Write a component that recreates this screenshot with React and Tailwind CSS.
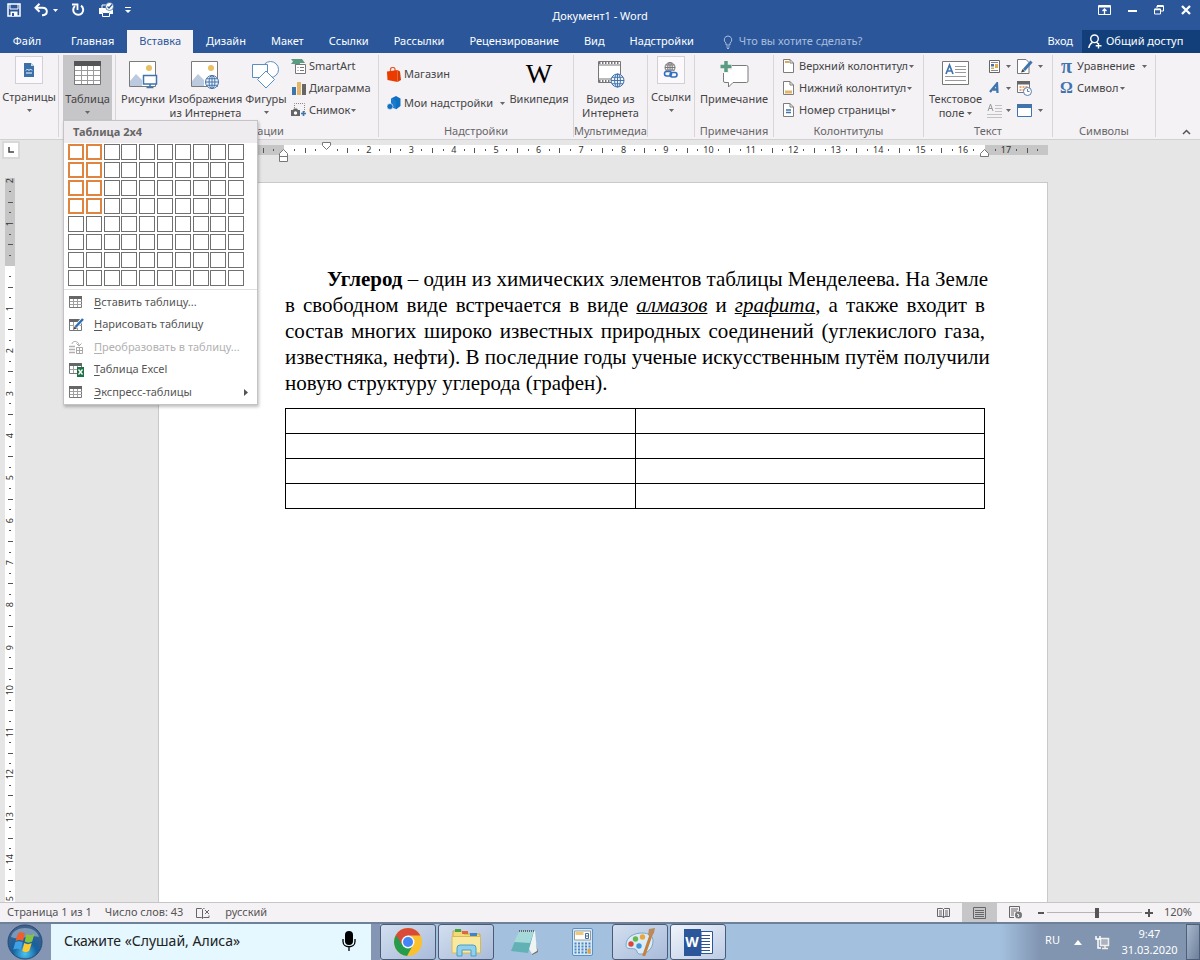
import React, { useState } from 'react';

/* ---------- small helpers ---------- */

const Caret = ({ className = '' }) => (
  <svg className={`shrink-0 ${className}`} width="5" height="3" viewBox="0 0 5 3">
    <path d="M0 0h5L2.500 3z" fill="#666" />
  </svg>
);

const Svg = ({ w, h, children }) => (
  <svg className="shrink-0" width={w} height={h} viewBox={`0 0 ${w} ${h}`} fill="none">
    {children}
  </svg>
);

/* ---------- quick access + window icons ---------- */

const SaveIcon = () => (
  <Svg w={14} h={14}>
    <path d="M1 1h12v12H1z" stroke="#fff" strokeWidth="1.500" />
    <path d="M3 1v5h8V1" stroke="#fff" />
    <path d="M3.500 8.500h7V13h-7z" fill="#fff" />
    <path d="M5 10h2v3H5z" fill="#2b579a" />
  </Svg>
);

const UndoIcon = () => (
  <Svg w={14} h={14}>
    <path d="M5.500 .8L1.500 4.800l4 4" stroke="#fff" strokeWidth="2" />
    <path d="M2 4.800h6.500c3 0 4.300 1.500 4.300 3.800s-1.800 3.700-4.800 3.700" stroke="#fff" strokeWidth="2" />
  </Svg>
);

const RedoIcon = () => (
  <Svg w={14} h={14}>
    <path d="M10 2.700a5 5 0 1 1-6 .3" stroke="#fff" strokeWidth="2" />
    <path d="M1 1.500h5.500V7" stroke="#fff" strokeWidth="1.800" />
  </Svg>
);

const PrintIcon = () => (
  <Svg w={17} h={16}>
    <path d="M1 6h14v6h-3v-2H4v2H1z" fill="#fff" />
    <path d="M4.500 10.500h7v4h-7z" fill="#2b579a" stroke="#fff" />
    <path d="M4 6V3h4" stroke="#fff" />
    <circle cx="11.500" cy="4.500" r="4" fill="#fff" stroke="#2b579a" strokeWidth=".7" />
    <path d="M9.500 4.500L11 6l3-3.500" stroke="#2b579a" strokeWidth="1.200" />
  </Svg>
);

const RibbonOptionsIcon = () => (
  <Svg w={13} h={10}>
    <path d="M.5.5h12v9H.5z" stroke="#fff" />
    <path d="M1 1h11v1.500H1z" fill="#fff" />
    <path d="M6.500 9V4M4.500 6l2-2 2 2" stroke="#fff" strokeWidth="1.300" />
  </Svg>
);

const RestoreIcon = () => (
  <Svg w={10} h={10}>
    <path d="M3 3V1h6.500v5H7" stroke="#fff" />
    <path d="M3 1h6.500" stroke="#fff" strokeWidth="2" />
    <path d="M.5 4h6v5h-6z" stroke="#fff" />
    <path d="M.5 4.500h6" stroke="#fff" strokeWidth="1.500" />
  </Svg>
);

const CloseIcon = () => (
  <Svg w={10} h={10}>
    <path d="M1 1l8 8M9 1L1 9" stroke="#fff" strokeWidth="2.300" />
  </Svg>
);

const PersonIcon = () => (
  <Svg w={14} h={15}>
    <circle cx="6.500" cy="4.800" r="3.800" stroke="#fff" strokeWidth="1.400" />
    <path d="M.8 14c.4-3 2-4.800 3.700-5.700M8.500 8.300l1.500 1.200M10.500 9v5.500M7.700 11.800h5.800" stroke="#fff" strokeWidth="1.400" />
  </Svg>
);

const BulbIcon = () => (
  <Svg w={10} h={14}>
    <path d="M5 1a3.800 3.800 0 0 0-2 7v2h4V8a3.800 3.800 0 0 0-2-7zM3.300 12h3.400M4 13.500h2" stroke="#a9bddd" />
  </Svg>
);

/* ---------- ribbon icons ---------- */

const Globe = ({ x = 0, y = 0, r = 6.5, color = '#3f74ad' }) => (
  <g transform={`translate(${x} ${y})`} stroke={color} strokeWidth="1">
    <circle r={r} fill="#f5f2f6" />
    <ellipse rx={r * 0.45} ry={r} />
    <path d={`M${-r} 0H${r}M0 ${-r}V${r}M${-r * 0.85} ${-r * 0.5}H${r * 0.85}M${-r * 0.85} ${r * 0.5}H${r * 0.85}`} />
  </g>
);

const PageIcon = () => (
  <Svg w={12} h={14}>
    <path d="M1 0h7l3 3v11H1z" fill="#3b70a9" />
    <path d="M8 0v3h3z" fill="#c9dbee" />
    <path d="M3 7.500l1.500-1.500L6 7.500 7.500 6 9 7.500M3 10h6" stroke="#fff" />
  </Svg>
);

const TableBigIcon = () => (
  <Svg w={27} h={24}>
    <path d="M.5.5h26v23H.5z" fill="#fff" stroke="#777" />
    <path d="M0 0h27v5H0z" fill="#555" />
    <path d="M1 9.500h25M1 14.500h25M1 19.500h25M7.500 5v18M13.500 5v18M19.500 5v18" stroke="#9a9a9a" />
  </Svg>
);

const Landscape = () => (
  <>
    <path d="M.5.5h26v25H.5z" fill="#fff" stroke="#7a7a7a" />
    <circle cx="20" cy="7" r="3" fill="#e8bf62" />
    <path d="M1 25v-5l6-7 6 6v6z" fill="#bccadf" />
  </>
);

const PictureIcon = () => (
  <Svg w={29} h={28}>
    <Landscape />
    <path d="M14.500 14.500h13v8.500h-13z" fill="#fff" stroke="#3f74ad" strokeWidth="1.500" />
    <path d="M21 23v3M17.500 26.500h7" stroke="#3f74ad" strokeWidth="1.500" />
  </Svg>
);

const WebPictureIcon = () => (
  <Svg w={29} h={28}>
    <Landscape />
    <Globe x={21} y={21} />
  </Svg>
);

const ShapesIcon = () => (
  <Svg w={28} h={28}>
    <circle cx="18.500" cy="8.500" r="8" fill="#fff" stroke="#5b8fc0" />
    <path d="M.5 3.500h15v13H.5z" fill="#fff" stroke="#5b8fc0" />
    <path d="M14 10l8.500 8.500-8.500 8.500-8.500-8.500z" fill="#fff" stroke="#5b8fc0" />
  </Svg>
);

const SmartArtIcon = () => (
  <Svg w={15} h={15}>
    <path d="M0 0h11l3 4H9v3H5L3.500 5H0l2-2.500z" fill="#5a9c82" />
    <path d="M4.500 5.500h10v9h-10z" fill="#fff" stroke="#777" />
    <path d="M6.500 8.500h1M9 8.500h4M6.500 11.500h1M9 11.500h4" stroke="#777" />
  </Svg>
);

const ChartIcon = () => (
  <Svg w={14} h={13}>
    <path d="M0 5h4v8H0z" fill="#3f74ad" />
    <path d="M5 0h4v13H5z" fill="#e3b566" />
    <path d="M10 2h4v11h-4z" fill="#666" />
  </Svg>
);

const ScreenshotIcon = () => (
  <Svg w={15} h={14}>
    <path d="M3.500 5V.5h10V9" stroke="#888" strokeDasharray="1 1" />
    <path d="M0 7h2l1-1.500h3L7 7h2v6H0z" fill="#666" />
    <circle cx="4.500" cy="10" r="1.700" fill="#fff" />
    <path d="M12.500 8v5M10 10.500h5" stroke="#3f74ad" strokeWidth="1.700" />
  </Svg>
);

const StoreIcon = () => (
  <Svg w={14} h={15}>
    <path d="M3.500 4.500V2C3.500 0 8 0 8 2v2.500" stroke="#e4572e" strokeWidth="1.200" />
    <path d="M0 4.500L10.500 3v12L.5 13z" fill="#eb3c00" />
    <path d="M10.500 3L13 4.500 14 13l-3.500 2z" fill="#d83b01" />
  </Svg>
);

const AddinsIcon = () => (
  <Svg w={14} h={14}>
    <path d="M4 2.500L9 0l4.500 2.500V10L9 13.500V6z" fill="#0f6fc0" />
    <path d="M4 2.500L9 5v8L6 12 4 7z" fill="#1a7ad0" />
    <circle cx="3" cy="10.500" r="3" fill="#0f6fc0" stroke="#f5f2f6" strokeWidth=".6" />
  </Svg>
);

const VideoIcon = () => (
  <Svg w={28} h={27}>
    <path d="M1.500.5h22v21h-22z" fill="#fff" stroke="#777" />
    <path d="M2 2h21M2 20h21" stroke="#777" strokeWidth="2" strokeDasharray="1.500 1.500" />
    <path d="M2 4h21M2 18h21" stroke="#777" />
    <Globe x={20.5} y={19.5} />
  </Svg>
);

const LinksIcon = () => (
  <Svg w={16} h={17}>
    <Globe x={7} y={5.5} r={5} color="#777" />
    <path d="M1 9h14v7H1z" fill="#f8f6f9" />
    <rect x="1.500" y="9.500" width="7" height="4.500" rx="2.200" stroke="#2f6fc0" strokeWidth="1.600" />
    <rect x="7" y="10.500" width="7" height="4.500" rx="2.200" stroke="#2f6fc0" strokeWidth="1.600" />
  </Svg>
);

const CommentIcon = () => (
  <Svg w={29} h={27}>
    <path d="M3.500 4.500h23q1.500 0 1.500 1.500v14q0 1.500-1.500 1.500H13L8.500 26v-4.500H5q-1.500 0-1.500-1.500z" fill="#fff" stroke="#7a7a7a" />
    <path d="M6 0v12M0 6h12" stroke="#f5f2f6" strokeWidth="6" />
    <path d="M6 0v11M.5 5.500h11" stroke="#5a9c82" strokeWidth="3.500" />
  </Svg>
);

const DocIcon = ({ kind }) => (
  <Svg w={11} h={14}>
    <path d="M.5.5h6.500l3.500 3.500v9.500H.5z" fill="#fff" stroke="#7d7d7d" />
    <path d="M7 .5V4h3.500" stroke="#7d7d7d" />
    {kind === 'header' && <path d="M2 3h4" stroke="#e3a94e" strokeWidth="2" />}
    {kind === 'footer' && <path d="M2 11h7" stroke="#e3b566" strokeWidth="3" />}
    {kind === 'number' && <path d="M3 7h5M3 9.500h5" stroke="#3f74ad" strokeWidth="1.500" />}
  </Svg>
);

const TextBoxIcon = () => (
  <Svg w={27} h={24}>
    <path d="M.5.5h26v23H.5z" fill="#fff" stroke="#777" />
    <path d="M4 13L7.500 4l3.500 9M5.300 10h4.400" stroke="#3f74ad" strokeWidth="1.700" />
    <path d="M13 5.500h11M13 8.500h11M13 11.500h11M3 15.500h21M3 19.500h21" stroke="#9a9a9a" />
  </Svg>
);

const QuickPartsIcon = () => (
  <Svg w={11} h={13}>
    <path d="M.5.5h10v12H.5z" fill="#fff" stroke="#666" />
    <path d="M2 2.500h7M2 10.500h7" stroke="#888" />
    <path d="M2 4h3v2.500H2z" fill="#3f74ad" />
    <path d="M6 4h3v4H6zM2 7.500h3V9H2z" fill="#e3a94e" />
  </Svg>
);

const SignatureIcon = () => (
  <Svg w={16} h={15}>
    <path d="M.5.5H9l3 3v11H.5z" fill="#fff" stroke="#777" />
    <path d="M14.500 2.500L7 11" stroke="#3f74ad" strokeWidth="3" />
    <path d="M4 13.500l1.500-3.500L8 12.500z" fill="#444" />
  </Svg>
);

const WordArtIcon = () => (
  <Svg w={11} h={12}>
    <path d="M1 10L8 1.500 8.500 11M4 7.500h5" stroke="#3f74ad" strokeWidth="2.300" />
  </Svg>
);

const DateIcon = () => (
  <Svg w={15} h={15}>
    <path d="M.5.5h12v11H.5z" fill="#fff" stroke="#777" />
    <path d="M0 0h13v3.500H0z" fill="#666" />
    <path d="M2.500 6h8M2.500 9h5" stroke="#e08a4a" strokeWidth="1.700" strokeDasharray="2 1" />
    <circle cx="10.500" cy="10.500" r="4" fill="#fff" stroke="#5b7fae" />
    <path d="M10.500 8v2.500h2" stroke="#5b7fae" />
  </Svg>
);

const DropCapIcon = () => (
  <Svg w={15} h={15}>
    <path d="M1 8L3.500 1 6 8M2 5.500h3" stroke="#999" />
    <path d="M8 2.500h7M8 5.500h7M8 8.500h7M0 11.500h15M0 14.500h15" stroke="#c2c2c2" />
  </Svg>
);

const ObjectIcon = () => (
  <Svg w={15} h={13}>
    <path d="M.5.5h14v12H.5z" fill="#fff" stroke="#3f74ad" />
    <path d="M0 0h15v4H0z" fill="#3f74ad" />
  </Svg>
);

/* ---------- menu icons ---------- */

const TableSmallIcon = () => (
  <Svg w={14} h={14}>
    <path d="M.5 1.500h12v11H.5z" fill="#fff" stroke="#777" />
    <path d="M0 1h13v3H0z" fill="#666" />
    <path d="M1 6.500h12M1 9.500h12M4.500 4v8M8.500 4v8" stroke="#a0a0a0" />
  </Svg>
);

const DrawTableIcon = () => (
  <Svg w={15} h={14}>
    <path d="M.5 1.500h12v11H.5z" fill="#fff" stroke="#777" />
    <path d="M0 1h10v3H0z" fill="#666" />
    <path d="M1 7.500h12M4.500 4v8M8.500 4v8" stroke="#a0a0a0" />
    <path d="M14 1L6 9.500" stroke="#fff" strokeWidth="4" />
    <path d="M14 1L6.500 9" stroke="#2f6fb5" strokeWidth="2.500" />
    <path d="M4.500 11.500l1-3L8 10.500z" fill="#444" />
  </Svg>
);

const ConvertIcon = () => (
  <Svg w={15} h={14}>
    <path d="M0 6.500h6M0 9.500h6M0 12.500h6" stroke="#b0b0b0" strokeWidth="1.300" />
    <path d="M7.500 7.500h6v6h-6zM10.500 8v5M8 10.500h6" stroke="#a8a8a8" />
    <path d="M3 4c0-3 6-4 7 1M7.500 3.500L10 6l2.500-2.500" stroke="#a8a8a8" />
  </Svg>
);

const ExcelIcon = () => (
  <Svg w={15} h={15}>
    <path d="M.5 1.500h12v10H.5z" fill="#fff" stroke="#777" />
    <path d="M0 1h13v3H0z" fill="#666" />
    <path d="M1 7.500h11M4.500 4v7M8.500 4v7" stroke="#a0a0a0" />
    <path d="M8 5h7v10H8z" fill="#1e7145" />
    <path d="M9.500 7.500l4 5M13.500 7.500l-4 5" stroke="#fff" strokeWidth="1.300" />
  </Svg>
);

/* ---------- ribbon building blocks ---------- */

const Group = ({ label, width, children }) => (
  <section className={`flex shrink-0 flex-col border-r border-[#d8d5d9] my-[2px] ${width}`}>
    <div className="flex flex-1">{children}</div>
    <div className="h-[14px] text-center leading-4 whitespace-nowrap text-[#666]">{label}</div>
  </section>
);

const BigButton = ({ icon, label, caret, className = '' }) => (
  <button className={`flex flex-col items-center pt-[6px] leading-[14px] ${className}`}>
    <span className="flex h-[31px] items-start justify-center">{icon}</span>
    <span className="whitespace-pre text-center">{label}</span>
    {caret && <Caret className="mt-[5px]" />}
  </button>
);

const BoxedButton = ({ icon, label, className = '' }) => (
  <button className={`flex flex-col items-center leading-[14px] ${className}`}>
    <span className="mt-px mb-[6px] flex size-7 items-center justify-center border border-[#d2d0d4] bg-[#fbf9fc]">{icon}</span>
    <span>{label}</span>
    <Caret className="mt-[5px]" />
  </button>
);

const SmallButton = ({ icon, label, caret, caretGap = 'ml-px' }) => (
  <button className="flex h-[22px] items-center whitespace-nowrap">
    <span className="mr-[3px] flex w-[15px] items-center justify-center">{icon}</span>
    {label && <span>{label}</span>}
    {caret && <Caret className={caretGap} />}
  </button>
);

/* ---------- title bar and tabs ---------- */

const TitleBar = () => (
  <header className="grid h-[30px] grid-cols-3 items-start text-white">
    <div className="flex h-5 items-center pl-[7px]">
      <button aria-label="Сохранить"><SaveIcon /></button>
      <button aria-label="Отменить" className="ml-[13px] flex items-center gap-[5px]">
        <UndoIcon />
        <svg width="5" height="3" viewBox="0 0 5 3"><path d="M0 0h5L2.500 3z" fill="#fff" /></svg>
      </button>
      <button aria-label="Повторить" className="ml-[13px]"><RedoIcon /></button>
      <button aria-label="Печать" className="ml-[13px]"><PrintIcon /></button>
      <button aria-label="Настройка панели" className="ml-[10px]">
        <svg width="6" height="6" viewBox="0 0 6 6"><path d="M0 0h6v1H0zM0 3h6L3 6z" fill="#fff" /></svg>
      </button>
    </div>
    <h1 className="pt-[6px] text-center leading-5">Документ1 - Word</h1>
    <div className="flex h-5 items-center justify-end gap-[17px] pr-[9px]">
      <button aria-label="Параметры ленты"><RibbonOptionsIcon /></button>
      <button aria-label="Свернуть"><Svg w={9} h={4}><path d="M0 3h9" stroke="#fff" strokeWidth="2" /></Svg></button>
      <button aria-label="Развернуть"><RestoreIcon /></button>
      <button aria-label="Закрыть"><CloseIcon /></button>
    </div>
  </header>
);

const tabs = ['Главная', 'Вставка', 'Дизайн', 'Макет', 'Ссылки', 'Рассылки', 'Рецензирование', 'Вид', 'Надстройки'];

const TabRow = () => {
  const [active, setActive] = useState('Вставка');

  return (
    <nav className="flex h-[23px] gap-px text-white">
      <button className="w-[58px] pr-1">Файл</button>
      {tabs.map((tab) => (
        <button
          key={tab}
          onClick={() => setActive(tab)}
          className={`px-3 ${tab === active ? 'bg-[#f5f2f6] text-[#2b579a]' : ''}`}
        >
          {tab}
        </button>
      ))}
      <label className="ml-4 flex flex-1 items-center gap-[6px]">
        <BulbIcon />
        <input
          aria-label="Помощник"
          placeholder="Что вы хотите сделать?"
          className="w-40 bg-transparent outline-none placeholder:text-[#a9bddd]"
        />
      </label>
      <button className="px-2">Вход</button>
      <button className="flex w-[118px] items-center gap-1 bg-[#123f7a] pl-[6px]">
        <PersonIcon />
        Общий доступ
      </button>
    </nav>
  );
};

/* ---------- table drop-down ---------- */

const menuItems = [
  { icon: <TableSmallIcon />, first: 'В', rest: 'ставить таблицу...' },
  { icon: <DrawTableIcon />, first: 'Н', rest: 'арисовать таблицу' },
  { icon: <ConvertIcon />, first: 'П', rest: 'реобразовать в таблицу...', disabled: true },
  { icon: <ExcelIcon />, first: 'Т', rest: 'аблица Excel' },
  { icon: <TableSmallIcon />, first: 'Э', rest: 'кспресс-таблицы', submenu: true },
];

const TableMenu = ({ size, onPick }) => (
  <div className="absolute top-[65px] left-0 z-20 w-[195px] border border-[#c5c3c6] bg-white shadow-[1px_2px_3px_rgba(0,0,0,0.25)]">
    <div className="h-[22px] bg-[#efecf0] pl-[9px] leading-[22px] font-bold text-[#666]">
      Таблица {size.cols}x{size.rows}
    </div>
    <div className="grid w-[182px] grid-cols-10 gap-y-[2px] pt-px pl-1">
      {Array.from({ length: 80 }, (_, i) => {
        const col = (i % 10) + 1;
        const row = Math.floor(i / 10) + 1;
        const selected = col <= size.cols && row <= size.rows;
        return (
          <button
            key={i}
            aria-label={`${col}x${row}`}
            onClick={() => onPick({ cols: col, rows: row })}
            className={`size-4 bg-white ${selected ? 'border-2 border-[#e0853f]' : 'border border-[#707070]'}`}
          />
        );
      })}
    </div>
    <ul className="mt-[3px] border-t border-[#e1dfe2] py-px">
      {menuItems.map((item, i) => (
        <li key={item.first}>
          <button
            disabled={item.disabled}
            className={`flex w-full items-center pl-[5px] ${i % 2 ? 'h-[23px]' : 'h-[22px]'} ${
              item.disabled ? 'text-[#b1b1b1]' : 'text-[#555]'
            }`}
          >
            <span className="w-[25px]">{item.icon}</span>
            <span>
              <span className="underline underline-offset-2">{item.first}</span>
              {item.rest}
            </span>
            {item.submenu && (
              <svg className="mr-[9px] ml-auto" width="4" height="7" viewBox="0 0 4 7">
                <path d="M0 0l4 3.500L0 7z" fill="#555" />
              </svg>
            )}
          </button>
        </li>
      ))}
    </ul>
  </div>
);

/* ---------- ribbon ---------- */

const Ribbon = ({ size, onPick }) => (
  <div className="flex h-[87px] border-b border-[#d2d0d3] bg-[#f5f2f6]">
    <Group width="w-[59px]">
      <BoxedButton icon={<PageIcon />} label="Страницы" className="w-full" />
    </Group>

    <Group width="w-[57px]">
      <div className="relative ml-[4px]">
        <BigButton icon={<TableBigIcon />} label="Таблица" caret className="h-[66px] w-[49px] bg-[#c6c5c7]" />
        <TableMenu size={size} onPick={onPick} />
      </div>
    </Group>

    <Group label="Иллюстрации" width="w-[263px]">
      <BigButton icon={<PictureIcon />} label="Рисунки" className="w-[54px]" />
      <BigButton icon={<WebPictureIcon />} label={'Изображения\nиз Интернета'} className="w-[71px]" />
      <BigButton icon={<ShapesIcon />} label="Фигуры" caret className="w-[50px]" />
      <div>
        <SmallButton icon={<SmartArtIcon />} label="SmartArt" />
        <SmallButton icon={<ChartIcon />} label="Диаграмма" />
        <SmallButton icon={<ScreenshotIcon />} label="Снимок" caret />
      </div>
    </Group>

    <Group label="Надстройки" width="w-[195px]">
      <div className="flex flex-col gap-[7px] pt-[8px] pl-[7px]">
        <SmallButton icon={<StoreIcon />} label="Магазин" />
        <SmallButton icon={<AddinsIcon />} label="Мои надстройки" caret caretGap="ml-[7px]" />
      </div>
      <BigButton
        icon={<span className="font-['Liberation_Serif',serif] text-[28px] leading-[26px] text-black">W</span>}
        label="Википедия"
        className="w-[70px]"
      />
    </Group>

    <Group label="Мультимедиа" width="w-[74px]">
      <BigButton icon={<VideoIcon />} label={'Видео из\nИнтернета'} className="w-full" />
    </Group>

    <Group width="w-[47px]">
      <BoxedButton icon={<LinksIcon />} label="Ссылки" className="w-full" />
    </Group>

    <Group label="Примечания" width="w-[79px]">
      <BigButton icon={<CommentIcon />} label="Примечание" className="w-full" />
    </Group>

    <Group label="Колонтитулы" width="w-[150px]">
      <div className="pl-[7px]">
        <SmallButton icon={<DocIcon kind="header" />} label="Верхний колонтитул" caret />
        <SmallButton icon={<DocIcon kind="footer" />} label="Нижний колонтитул" caret />
        <SmallButton icon={<DocIcon kind="number" />} label="Номер страницы" caret />
      </div>
    </Group>

    <Group label="Текст" width="w-[129px]">
      <BigButton
        icon={<TextBoxIcon />}
        label={
          <>
            Текстовое
            {'\n'}
            <span className="inline-flex items-center gap-[3px]">поле<Caret /></span>
          </>
        }
        className="w-[63px]"
      />
      <div className="pr-[6px]">
        <SmallButton icon={<QuickPartsIcon />} caret />
        <SmallButton icon={<WordArtIcon />} caret />
        <SmallButton icon={<DropCapIcon />} caret />
      </div>
      <div>
        <SmallButton icon={<SignatureIcon />} caret caretGap="ml-[3px]" />
        <SmallButton icon={<DateIcon />} />
        <SmallButton icon={<ObjectIcon />} caret caretGap="ml-[3px]" />
      </div>
    </Group>

    <Group label="Символы" width="w-[103px]">
      <div className="pl-[6px]">
        <SmallButton icon={<span className="font-['Liberation_Serif',serif] text-xl leading-5 font-bold text-[#3f74ad]">π</span>} label="Уравнение" caret caretGap="ml-[7px]" />
        <SmallButton icon={<span className="font-['Liberation_Serif',serif] text-base font-bold text-[#3f74ad]">Ω</span>} label="Символ" caret />
      </div>
    </Group>

    <button aria-label="Свернуть ленту" className="mr-[9px] mb-[4px] ml-auto self-end">
      <Svg w={9} h={6}><path d="M1 5l3.500-3.500L8 5" stroke="#555" strokeWidth="1.500" /></Svg>
    </button>
  </div>
);

/* ---------- rulers ---------- */

// One mark per quarter of a centimetre, numbers on whole ones
const marks = (from, to) =>
  Array.from({ length: (to - from) * 4 + 1 }, (_, i) => from + i / 4);

const Mark = ({ value, skip, vertical }) => {
  const whole = Number.isInteger(value);
  const half = Number.isInteger(value * 2);
  let content = null;

  if (!skip) {
    if (whole) {
      content = <span className={vertical ? 'rotate-180 [writing-mode:vertical-rl]' : ''}>{Math.abs(value)}</span>;
    } else if (half) {
      content = <span className={`shrink-0 bg-[#555] ${vertical ? 'h-px w-[5px]' : 'h-[5px] w-px'}`} />;
    } else {
      content = <span className={`shrink-0 bg-[#555] ${vertical ? 'h-px w-[2px]' : 'h-[2px] w-px'}`} />;
    }
  }

  return <span className={`flex items-center justify-center ${vertical ? 'h-0' : 'w-0'}`}>{content}</span>;
};

const HorizontalRuler = () => (
  <div className="flex h-[42px] items-start">
    <button aria-label="Тип табуляции" className="mt-px ml-[2px] flex size-[18px] shrink-0 items-center justify-center border-2 border-[#d9d9d9] bg-white">
      <Svg w={6} h={6}><path d="M1 0v5h5" stroke="#444" strokeWidth="1.500" /></Svg>
    </button>
    <div className="flex flex-1 justify-center pr-[14px]">
      <div className="mt-[5px] flex h-[10px] w-[890px] text-[9px] leading-[10px] text-[#333]">
        <div className="flex w-[126px] justify-between bg-[#c6c6c6]">
          {marks(-3, 0).map((v) => <Mark key={v} value={v} skip={v === 0 || v === -3} />)}
        </div>
        <div className="relative flex flex-1 justify-between bg-white">
          {marks(0, 16.5).map((v) => <Mark key={v} value={v} skip={v === 0 || v === 1 || v === 16.5} />)}
          <svg className="absolute -top-[3px] left-[38px]" width="9" height="8" viewBox="0 0 9 8">
            <path d="M.5.5h8v3l-4 4-4-4z" fill="#fff" stroke="#777" />
          </svg>
          <svg className="absolute top-[4px] -left-[5px]" width="9" height="13" viewBox="0 0 9 13">
            <path d="M.5 4.500l4-4 4 4v8h-8zM.5 7.500h8" fill="#fff" stroke="#777" />
          </svg>
          <svg className="absolute top-[4px] -right-[4px] z-10" width="9" height="8" viewBox="0 0 9 8">
            <path d="M.5 7.500v-3l4-4 4 4v3z" fill="#fff" stroke="#777" />
          </svg>
        </div>
        <div className="flex w-[63px] justify-between bg-[#c6c6c6]">
          {marks(16.5, 18).map((v) => <Mark key={v} value={v} skip={v === 16.5 || v === 18} />)}
        </div>
      </div>
    </div>
  </div>
);

const VerticalRuler = () => (
  <div className="-mt-1 w-5 shrink-0 overflow-hidden pl-[5px] text-[9px] leading-[10px] text-[#333]">
    <div className="flex h-[88px] w-[10px] flex-col justify-between bg-[#c6c6c6] pt-[3px]">
      {marks(-2, 0).map((v) => <Mark key={v} value={v} skip={v === 0} vertical />)}
    </div>
    <div className="flex h-[636px] w-[10px] flex-col justify-between bg-white">
      {marks(0, 15).map((v) => <Mark key={v} value={v} skip={v === 0} vertical />)}
    </div>
  </div>
);

/* ---------- document ---------- */

const lines = [
  <><b>Углерод</b> – один из химических элементов таблицы Менделеева. На Земле</>,
  <>в свободном виде встречается в виде <i className="underline decoration-1">алмазов</i> и <i className="underline decoration-1">графита</i>, а также входит в</>,
  <>состав многих широко известных природных соединений (углекислого газа,</>,
  <>известняка, нефти). В последние годы ученые искусственным путём получили</>,
  <>новую структуру углерода (графен).</>,
];

const DocumentPage = ({ size }) => (
  <article className="min-h-full w-[890px] border border-b-0 border-[#c9c9c9] bg-white pt-[83px] pr-[62px] pl-[126px] font-['Liberation_Serif',serif] text-[21px] leading-[26px] text-black">
    <p>
      {lines.map((line, i) => (
        <span
          key={i}
          className={`block whitespace-nowrap ${i === 0 ? 'indent-[42px]' : ''} ${
            i < lines.length - 1 ? '[text-align-last:justify]' : ''
          }`}
        >
          {line}
        </span>
      ))}
    </p>
    <table className="mt-[12px] w-full table-fixed border-collapse">
      <tbody>
        {Array.from({ length: size.rows }, (_, r) => (
          <tr key={r} className="h-[25px]">
            {Array.from({ length: size.cols }, (_, c) => (
              <td key={c} className="border border-black" />
            ))}
          </tr>
        ))}
      </tbody>
    </table>
  </article>
);

/* ---------- status bar ---------- */

const StatusBar = () => (
  <footer className="flex h-5 items-center border-t border-[#c6c6c6] bg-[#f5f2f6] pl-[7px] text-[#555]">
    <span>Страница 1 из 1</span>
    <span className="ml-[13px]">Число слов: 43</span>
    <button aria-label="Правописание" className="ml-[13px]">
      <Svg w={14} h={12}>
        <path d="M.5 1.500h5l1 1v9l-1-1h-5zM6.500 2.500l1-1h1M6.500 11.500l1-1h5.500V8.500M9 3l4 4M13 3L9 7" stroke="#666" />
      </Svg>
    </button>
    <span className="ml-[15px]">русский</span>
    <div className="ml-auto flex h-full items-center">
      <button aria-label="Режим чтения" className="mr-[12px]">
        <Svg w={13} h={12}>
          <path d="M.5 1.500h5l1 1 1-1h5v8h-5l-1 1.500-1-1.500h-5zM6.500 2v9M2 4h3M2 6h3M2 8h3M8 4h3M8 6h3M8 8h3" stroke="#666" />
        </Svg>
      </button>
      <button aria-label="Разметка страницы" className="flex h-full w-[35px] items-center justify-center bg-[#c6c5c7]">
        <Svg w={13} h={12}>
          <path d="M.5.5h12v11H.5zM2 3.500h9M2 5.500h9M2 7.500h9M2 9.500h9" stroke="#666" />
        </Svg>
      </button>
      <button aria-label="Веб-документ" className="ml-[12px]">
        <Svg w={13} h={13}>
          <path d="M5 11.500H.5V.5h10V5M2 3h7M2 5h6M2 7h3M2 9h3" stroke="#666" />
          <circle cx="9.500" cy="9" r="3.500" fill="#777" />
          <path d="M8 8l2 1-1 2" stroke="#fff" />
        </Svg>
      </button>
      <button aria-label="Уменьшить" className="ml-[16px] h-[2px] w-[6px] bg-[#555]" />
      <input
        type="range"
        aria-label="Масштаб"
        min="10"
        max="220"
        defaultValue="120"
        className="mx-[3px] h-3 w-[95px] appearance-none bg-[linear-gradient(#b5b3b6,#b5b3b6)] bg-[length:100%_1px] bg-center bg-no-repeat [&::-webkit-slider-thumb]:h-[10px] [&::-webkit-slider-thumb]:w-[4px] [&::-webkit-slider-thumb]:appearance-none [&::-webkit-slider-thumb]:bg-[#555]"
      />
      <button aria-label="Увеличить">
        <Svg w={8} h={8}><path d="M4 0v8M0 4h8" stroke="#555" strokeWidth="2" /></Svg>
      </button>
      <span className="w-[47px] pr-[8px] text-right">120%</span>
    </div>
  </footer>
);

/* ---------- taskbar ---------- */

const StartOrb = () => (
  <svg width="36" height="36" viewBox="0 0 36 36">
    <defs>
      <radialGradient id="orb" cx="50%" cy="85%" r="80%">
        <stop offset="0" stopColor="#49c5f2" />
        <stop offset=".45" stopColor="#17609f" />
        <stop offset="1" stopColor="#41628c" />
      </radialGradient>
    </defs>
    <circle cx="18" cy="18" r="17" fill="url(#orb)" stroke="#2b4970" />
    <path d="M4 13C7 1 29 1 32 13 24 10 12 17 4 13z" fill="#fff" opacity=".35" />
    <path d="M11 9.500c2.500-1.600 4.500-1.500 7 0l-2 7.500c-2.500-1.500-5-1.500-7.500 0z" fill="#ef5f2c" />
    <path d="M19.500 10c2.500 1.500 5 1.500 8-.5l-2.300 8c-2.500 1.500-5 1.500-7.500 0z" fill="#86c440" />
    <path d="M8.200 18.300c2.500-1.500 5-1.500 7.500 0l-2 7.500c-2.500-1.500-5-1.500-7.500 0z" fill="#3fa0e6" />
    <path d="M17.200 19c2.500 1.500 5 1.500 7.500 0l-2.500 8c-2.500 1.500-4.500 1.500-7 0z" fill="#fcc92e" />
  </svg>
);

const MicIcon = () => (
  <Svg w={14} h={20}>
    <rect x="3" y="0" width="8" height="14" rx="4" fill="#000" />
    <path d="M1 8v2.500c0 7 12 7 12 0V8M7 15.500V20" stroke="#000" strokeWidth="1.300" />
  </Svg>
);

const ChromeIcon = () => (
  <Svg w={28} h={28}>
    <circle cx="14" cy="14" r="14" fill="#fbc02d" />
    <path d="M1.900 7A14 14 0 0 0 13 28l6-11-5-3z" fill="#259b4e" />
    <path d="M14 7.500h12.400A14 14 0 0 0 1.900 7L8.400 17z" fill="#d84a3a" />
    <circle cx="14" cy="14" r="6.500" fill="#f4f6f9" />
    <circle cx="14" cy="14" r="5" fill="#4285f4" />
  </Svg>
);

const FolderIcon = () => (
  <Svg w={31} h={29}>
    <path d="M2 3h9l2 3h16v17H2z" fill="#f3d977" stroke="#c9a945" />
    <path d="M4 1h6v3H4z" fill="#47a447" />
    <path d="M11 3h6v3h-6z" fill="#e2663b" />
    <path d="M19 5h7v3h-7z" fill="#3f85c6" />
    <path d="M1 8.500h28.500V25H1z" fill="#f9e9a0" stroke="#d6ba5a" />
    <path d="M6 28v-8q0-3 3-3h13q3 0 3 3v8h-5v-6h-9v6z" fill="#8fd0ee" stroke="#4d9cc6" />
  </Svg>
);

const NotepadIcon = () => (
  <Svg w={29} h={27}>
    <path d="M23 3l5 20-6 3z" fill="#73695d" />
    <path d="M9 2h16l2 20-5 3z" fill="#eef4f4" />
    <path d="M9 2h15l-6 22-17-2z" fill="#62b1b4" />
    <path d="M9 2h15l-4 12L4 13z" fill="#a6d9d9" />
    <path d="M9 2h15" stroke="#666" strokeWidth="2" strokeDasharray="1 1" />
  </Svg>
);

const CalcIcon = () => (
  <Svg w={21} h={28}>
    <rect x=".5" y=".5" width="20" height="27" rx="1.500" fill="#d7e8f6" stroke="#5a91c4" />
    <path d="M2.500 3h16v9h-16z" fill="#fff" stroke="#9a9a9a" />
    <path d="M3.500 4h8v3h-8z" fill="#f0c878" />
    <path d="M13.500 5.500h3v5h-3zM13.500 8h3" stroke="#3f6ea5" />
    <path d="M2.500 15.500h16M2.500 18.500h16M2.500 21.500h16M2.500 24.500h16" stroke="#4c88c2" strokeWidth="2" strokeDasharray="2 1.500" />
    <path d="M15.500 21h3v4.500h-3z" fill="#eaa13a" />
  </Svg>
);

const PaintIcon = () => (
  <Svg w={31} h={28}>
    <path d="M1 17C1 9 9 5 17 5c7 0 11 3 11 8 0 8-7 14-14 13-3-1-1-4-4-5-4-1-9 1-9-4z" fill="#d9ecf7" stroke="#7aa7c7" />
    <circle cx="6" cy="16" r="2.700" fill="#d9463e" />
    <circle cx="10.500" cy="11" r="2.700" fill="#69b64a" />
    <circle cx="17.500" cy="9" r="2.700" fill="#eba63a" />
    <circle cx="14" cy="18" r="2.700" fill="#3f93d6" />
    <path d="M26 7l-7 20" stroke="#c4803f" strokeWidth="3" strokeLinecap="round" />
    <path d="M24 1l6-1-1 5-3 4-3-2z" fill="#b98a5e" />
  </Svg>
);

const WordIcon = () => (
  <span className="flex items-center">
    <span className="flex h-[27px] w-[17px] items-center justify-center bg-[#2b579a] text-sm font-bold text-white">W</span>
    <Svg w={12} h={23}>
      <path d="M0 .5h11.500v22H0z" fill="#fff" stroke="#2b579a" />
      <path d="M0 4.500h9M0 7.500h9M0 10.500h9M0 13.500h9M0 16.500h9M0 19.500h9" stroke="#2b579a" />
    </Svg>
  </span>
);

const apps = [
  { name: 'Chrome', icon: <ChromeIcon />, open: true },
  { name: 'Проводник', icon: <FolderIcon />, open: true },
  { name: 'Блокнот', icon: <NotepadIcon /> },
  { name: 'Калькулятор', icon: <CalcIcon /> },
  { name: 'Paint', icon: <PaintIcon />, open: true },
  { name: 'Word', icon: <WordIcon />, open: true, active: true },
];

const Taskbar = () => (
  <div className="flex h-[38px] border-t-2 border-[#6f8099] bg-[#a3c1df]">
    <button aria-label="Пуск" className="flex w-[51px] items-center justify-center bg-[#8496b3] pr-px">
      <StartOrb />
    </button>
    <div className="flex w-[320px] items-center bg-[#e5f7ff] pr-[15px] pb-[2px] pl-[13px]">
      <input
        aria-label="Алиса"
        defaultValue="Скажите «Слушай, Алиса»"
        className="min-w-0 flex-1 bg-transparent text-sm text-[#222] outline-none"
      />
      <button aria-label="Микрофон"><MicIcon /></button>
    </div>
    <div className="w-[9px] bg-[#8496b3]" />
    <div className="flex gap-[2px]">
      {apps.map((app) => (
        <button
          key={app.name}
          aria-label={app.name}
          className={`flex w-14 items-center justify-center ${
            app.open ? 'rounded-[3px] border border-[#4b5b75]' : ''
          } ${app.open && !app.active ? 'bg-linear-to-br from-[#d3dff0] to-[#a9bbda]' : ''} ${
            app.active ? 'bg-linear-to-br from-[#f0f4fb] to-[#bccbe4]' : ''
          }`}
        >
          {app.icon}
        </button>
      ))}
    </div>
    <div className="ml-auto flex w-[200px] items-center justify-end bg-linear-to-r from-[#a3c1df] to-[#8195b1] to-20% text-white">
      <span className="pb-1">RU</span>
      <svg className="ml-[14px]" width="8" height="5" viewBox="0 0 8 5"><path d="M0 5l4-5 4 5z" fill="#fff" /></svg>
      <span className="ml-[13px]">
        <Svg w={15} h={15}>
          <path d="M5.500 3.500h8v7h-8z" fill="#a9b2c0" stroke="#f3efe8" strokeWidth="1.500" />
          <path d="M7 13.500h6M10 11v2" stroke="#f3efe8" strokeWidth="1.500" />
          <path d="M1 1v3h4V1M3 4v9h3" stroke="#fff" strokeWidth="1.500" />
        </Svg>
      </span>
      <time className="mr-[7px] ml-[10px] w-[59px] text-center leading-4 whitespace-nowrap">
        9:47
        <br />
        31.03.2020
      </time>
      <button aria-label="Показать рабочий стол" className="h-full w-[14px] border border-[#4f5f77] bg-linear-to-br from-[#a9b8cc] to-[#6d809c]" />
    </div>
  </div>
);

export default function App() {
  const [size, setSize] = useState({ cols: 2, rows: 4 });

  return (
    <div className="flex h-screen flex-col overflow-hidden bg-[#2b579a] font-['Noto_Sans','Open_Sans',sans-serif] text-[11px] text-[#444]">
      <TitleBar />
      <TabRow />
      <Ribbon size={size} onPick={setSize} />
      <main className="flex min-h-0 flex-1 flex-col bg-[#e6e6e6]">
        <HorizontalRuler />
        <div className="flex min-h-0 flex-1">
          <VerticalRuler />
          <div className="flex flex-1 justify-center overflow-hidden pr-[14px]">
            <DocumentPage size={size} />
          </div>
        </div>
      </main>
      <StatusBar />
      <Taskbar />
    </div>
  );
}
